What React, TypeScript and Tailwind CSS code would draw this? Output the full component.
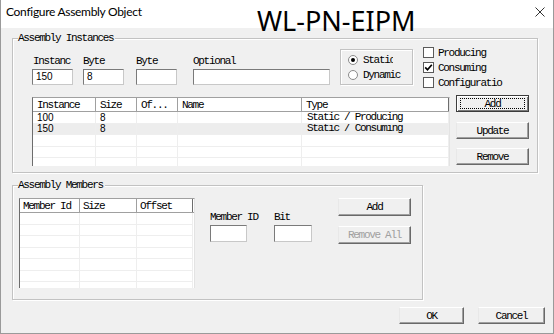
import React from "react";

const monoBase = "font-['Liberation_Mono',monospace] text-[11px] tracking-[-1.3px]";
const mono = monoBase + " text-black";
const sans = "font-['Liberation_Sans',Arial,sans-serif] text-[10px] text-black";

function Btn({
  children,
  cls,
  def,
  disabled,
}: {
  children: React.ReactNode;
  cls: string;
  def?: boolean;
  disabled?: boolean;
}) {
  return (
    <div
      className={
        "relative flex items-center justify-center bg-[#f0f0f0] border " +
        (def
          ? "border-[#3c3c3c] shadow-[inset_1px_1px_0_#ffffff,inset_-1px_-1px_0_#7a7a7a] "
          : "border-t-[#ffffff] border-l-[#e8e8e8] border-r-[#696969] border-b-[#696969] shadow-[inset_-1px_-1px_0_#a0a0a0] ") +
        cls
      }
    >
      <span className={monoBase + " leading-[12px] " + (disabled ? "text-[#a0a0a0]" : "text-black")}>{children}</span>
      {def && <span className="absolute inset-x-[3px] inset-y-[2px] border border-dotted border-black" />}
    </div>
  );
}

function Edit({ cls, value }: { cls: string; value?: string }) {
  return (
    <div
      className={
        "bg-white border border-[#c8c8c8] border-t-[#7a7a7a] border-l-[#7a7a7a] flex items-center pl-[3px] " + cls
      }
    >
      <span className={sans + " leading-[12px]"}>{value}</span>
    </div>
  );
}

function Group({ label, cls, children }: { label: string; cls: string; children: React.ReactNode }) {
  return (
    <div className={"relative border border-[#c2c2c2] shadow-[inset_1px_1px_0_#ffffff,1px_1px_0_#ffffff] " + cls}>
      <span className={"absolute left-[5px] top-[-7px] bg-[#f0f0f0] pr-[2px] leading-[12px] " + mono}>{label}</span>
      {children}
    </div>
  );
}

function Check({ label, checked }: { label: string; checked?: boolean }) {
  return (
    <div className="h-[15px] flex items-center">
      <div className="w-[11px] h-[11px] bg-white border border-[#5a5a5a] flex items-center justify-center">
        {checked && (
          <svg width="9" height="9" viewBox="0 0 9 9">
            <polyline points="1.2,4.3 3.5,6.8 7.8,1.8" fill="none" stroke="#000" strokeWidth="1.7" />
          </svg>
        )}
      </div>
      <span className={mono + " ml-[4px] leading-[12px] whitespace-nowrap"}>{label}</span>
    </div>
  );
}

function Radio({ label, on, clip }: { label: string; on?: boolean; clip?: boolean }) {
  return (
    <div className="h-[15px] flex items-center">
      <div className="w-[10px] h-[10px] rounded-full bg-white border border-[#8a8a8a] flex items-center justify-center">
        {on && <div className="w-[4px] h-[4px] rounded-full bg-black" />}
      </div>
      <span
        className={
          mono + " ml-[5px] leading-[12px] whitespace-nowrap " + (clip ? "w-[30px] overflow-hidden" : "")
        }
      >
        {label}
      </span>
    </div>
  );
}

const cols1 = [
  { w: "w-[63px]", t: "Instance" },
  { w: "w-[41px]", t: "Size" },
  { w: "w-[41px]", t: "Of..." },
  { w: "w-[124px]", t: "Name" },
  { w: "w-[147px]", t: "Type" },
];

const rows1 = [
  ["100", "8", "", "", "Static / Producing"],
  ["150", "8", "", "", "Static / Consuming"],
  ["", "", "", "", ""],
  ["", "", "", "", ""],
  ["", "", "", "", ""],
];

const cols2 = [
  { w: "w-[60px]", t: "Member Id" },
  { w: "w-[57px]", t: "Size" },
  { w: "w-[56px]", t: "Offset" },
];

function App() {
  return (
    <div className="w-[554px] h-[334px] bg-[#f0f0f0] border-x border-b border-[#9a9a9a] flex flex-col overflow-hidden">
      {/* title bar */}
      <div className="h-[28px] shrink-0 bg-white flex items-start relative">
        <span className="mt-[5px] ml-[5px] font-['Lato',sans-serif] text-[12px] tracking-[-0.3px] leading-[14px] text-black">
          Configure Assembly Object
        </span>
        <span className="absolute left-[256px] top-[7px] font-['Noto_Sans',sans-serif] text-[27px] leading-none text-black">
          WL-PN-EIPM
        </span>
        <svg className="ml-auto mr-[8px] mt-[7px]" width="10" height="10" viewBox="0 0 10 10">
          <path d="M0.5 0.5 L9.5 9.5 M9.5 0.5 L0.5 9.5" stroke="#333" strokeWidth="1" />
        </svg>
      </div>

      <div className="pl-[11px] flex flex-col">
        {/* Assembly Instances */}
        <Group label="Assembly Instances" cls="mt-[10px] w-[526px] h-[135px]">
          <div className="flex items-start pt-[6px] pl-[19px]">
            <div className="w-[41px] mt-[10px] flex flex-col">
              <span className={mono + " leading-[12px] ml-[1px]"}>Instanc</span>
              <Edit cls="mt-[2px] h-[16px]" value="150" />
            </div>
            <div className="w-[41px] ml-[10px] mt-[10px] flex flex-col">
              <span className={mono + " leading-[12px]"}>Byte</span>
              <Edit cls="mt-[2px] h-[16px]" value="8" />
            </div>
            <div className="w-[41px] ml-[12px] mt-[10px] flex flex-col">
              <span className={mono + " leading-[12px]"}>Byte</span>
              <Edit cls="mt-[2px] h-[16px]" />
            </div>
            <div className="w-[137px] ml-[16px] mt-[10px] flex flex-col">
              <span className={mono + " leading-[12px]"}>Optional</span>
              <Edit cls="mt-[2px] h-[16px]" />
            </div>
            <div className="w-[73px] h-[36px] ml-[10px] mt-[4px] border border-[#c2c2c2] shadow-[inset_1px_1px_0_#ffffff,1px_1px_0_#ffffff] pt-[2px] pl-[7px] flex flex-col">
              <Radio label="Static" on clip />
              <Radio label="Dynamic" />
            </div>
            <div className="ml-[10px] flex flex-col">
              <Check label="Producing" />
              <Check label="Consuming" checked />
              <Check label="Configuratio" />
            </div>
          </div>

          <div className="flex items-start mt-[5px] pl-[19px]">
            <div className="mt-[2px] w-[418px] h-[69px] bg-white border-l border-t border-r border-l-[#6d6d6d] border-t-[#a0a0a0] border-r-[#e3e3e3] overflow-hidden">
              <div className="flex h-[14px] border-b border-[#a0a0a0] bg-white">
                {cols1.map((c, i) => (
                  <div
                    key={i}
                    className={
                      c.w +
                      " h-full border-r flex items-center pl-[4px] " +
                      (i === 4 ? "border-[#6d6d6d]" : "border-[#a0a0a0]")
                    }
                  >
                    <span className={mono + " leading-[12px]"}>{c.t}</span>
                  </div>
                ))}
              </div>
              {rows1.map((r, ri) => (
                <div key={ri} className={"flex h-[11.5px] " + (ri === 1 ? "bg-[#ededed]" : "bg-white")}>
                  {cols1.map((c, ci) => (
                    <div
                      key={ci}
                      className={c.w + " h-full border-r border-b border-[#eeeeee] flex items-center pl-[4px] overflow-hidden"}
                    >
                      <span
                        className={
                          (ci === 4 ? mono + " pl-[1px]" : sans) + " leading-[11px] whitespace-pre"
                        }
                      >
                        {r[ci]}
                      </span>
                    </div>
                  ))}
                </div>
              ))}
            </div>
            <div className="ml-[6px] flex flex-col">
              <Btn cls="w-[73px] h-[17px]" def>
                Add
              </Btn>
              <Btn cls="w-[73px] h-[17px] mt-[10px]">Update</Btn>
              <Btn cls="w-[73px] h-[17px] mt-[9px]">Remove</Btn>
            </div>
          </div>
        </Group>

        {/* Assembly Members */}
        <Group label="Assembly Members" cls="mt-[12px] w-[411px] h-[115px]">
          <div className="flex items-start pt-[12px] pl-[6px]">
            <div className="w-[176px] h-[90px] bg-white border-l border-t border-r border-l-[#6d6d6d] border-t-[#a0a0a0] border-r-[#e3e3e3] overflow-hidden">
              <div className="flex h-[14px] border-b border-[#a0a0a0]">
                {cols2.map((c, i) => (
                  <div
                    key={i}
                    className={
                      c.w +
                      " h-full border-r flex items-center pl-[3px] " +
                      (i === 2 ? "border-[#6d6d6d]" : "border-[#a0a0a0]")
                    }
                  >
                    <span className={mono + " leading-[12px] whitespace-nowrap"}>{c.t}</span>
                  </div>
                ))}
              </div>
              {[0, 1, 2, 3, 4, 5, 6].map((ri) => (
                <div key={ri} className="flex h-[11.5px]">
                  {cols2.map((c, ci) => (
                    <div key={ci} className={c.w + " h-full border-r border-b border-[#eeeeee]"} />
                  ))}
                </div>
              ))}
            </div>
            <div className="w-[37px] ml-[15px] mt-[13px] flex flex-col">
              <span className={mono + " leading-[12px] whitespace-nowrap"}>Member ID</span>
              <Edit cls="mt-[2px] h-[17px]" />
            </div>
            <div className="w-[38px] ml-[27px] mt-[13px] flex flex-col">
              <span className={mono + " leading-[12px]"}>Bit</span>
              <Edit cls="mt-[2px] h-[17px]" />
            </div>
            <div className="ml-[26px] flex flex-col">
              <Btn cls="w-[73px] h-[18px]">Add</Btn>
              <Btn cls="w-[73px] h-[18px] mt-[10px]" disabled>
                Remove All
              </Btn>
            </div>
          </div>
        </Group>
      </div>

      {/* bottom buttons */}
      <div className="flex justify-end pr-[8px] mt-[7px]">
        <Btn cls="w-[65px] h-[17px]">OK</Btn>
        <Btn cls="w-[67px] h-[17px] ml-[14px]">Cancel</Btn>
      </div>
    </div>
  );
}

export default App;
